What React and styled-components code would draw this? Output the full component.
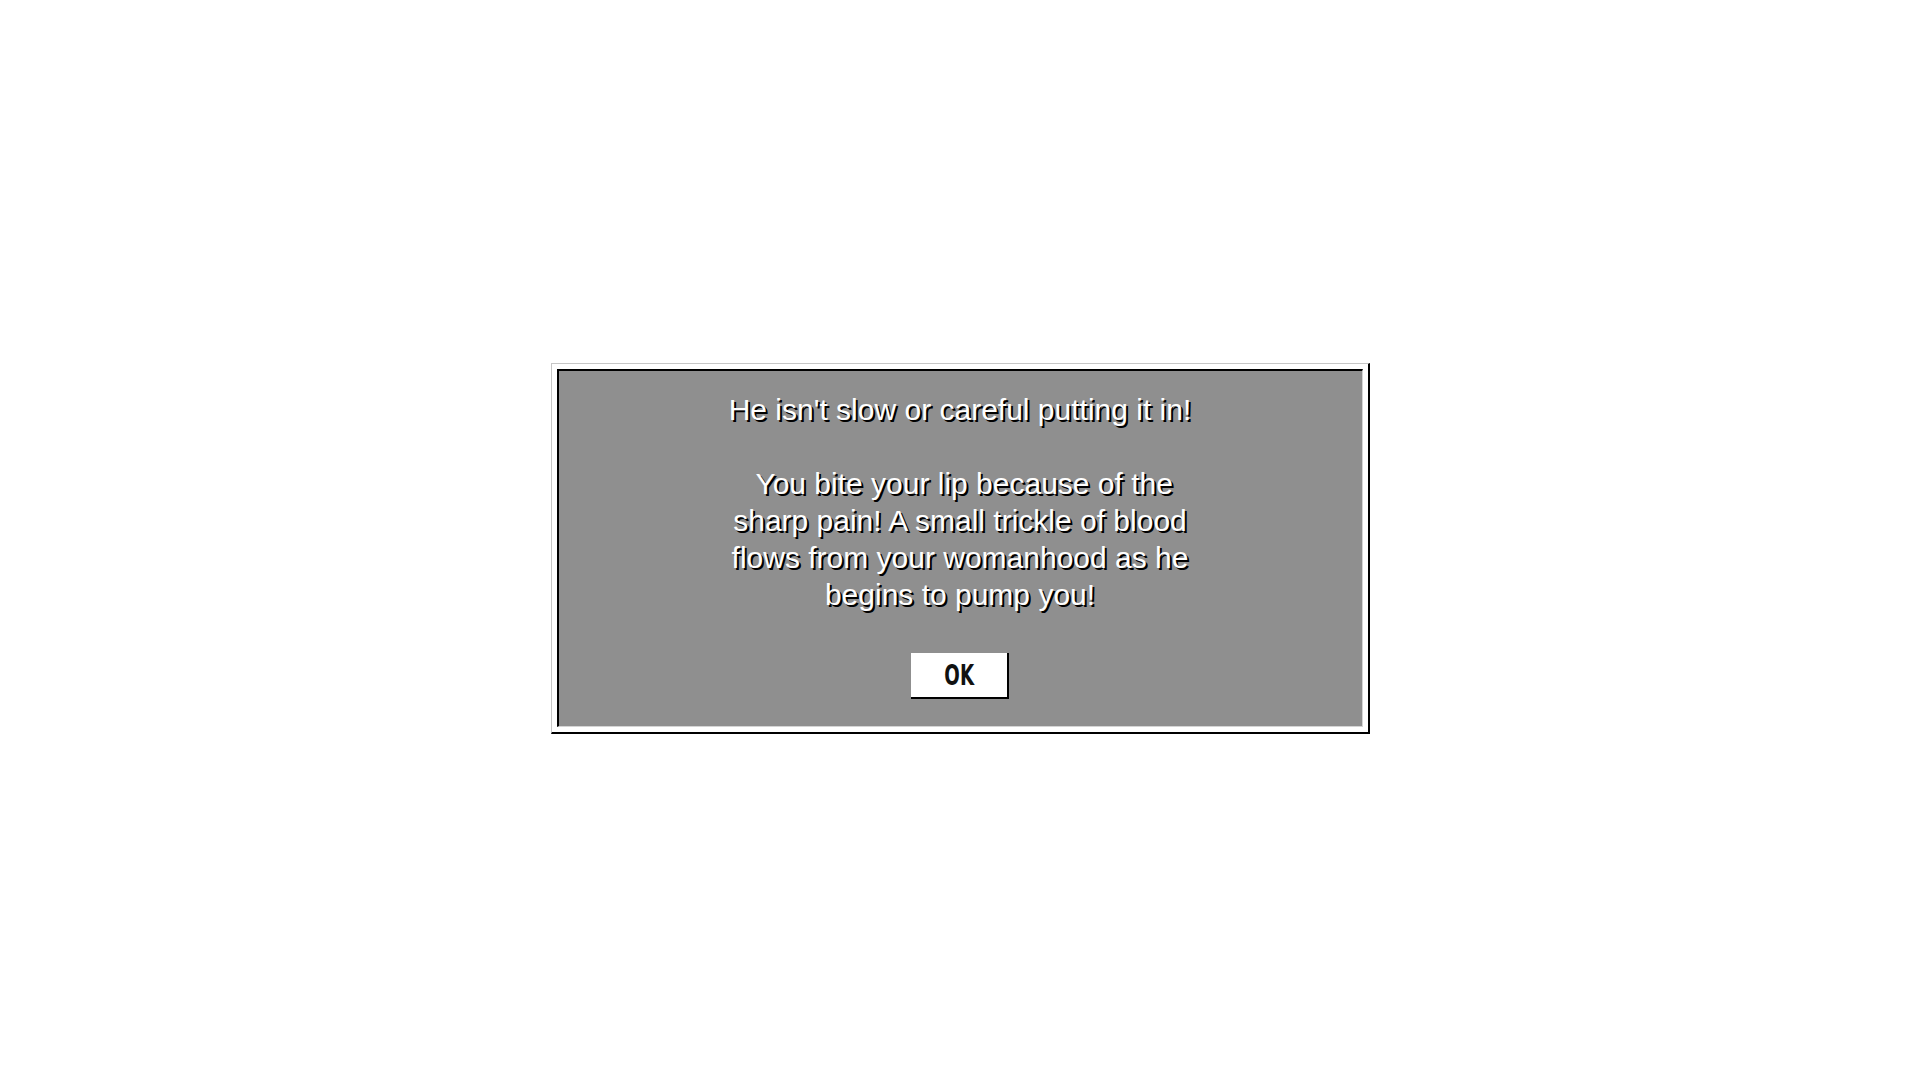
import React from "react";
import styled, { createGlobalStyle } from "styled-components";

const Global = createGlobalStyle`
  html, body { margin: 0; padding: 0; background: #ffffff; }
  * { box-sizing: border-box; }
`;

const Screen = styled.div`
  height: 1080px;
  padding-top: 16px;
  display: flex;
  align-items: center;
  justify-content: center;
`;

const Frame = styled.div`
  background: #ffffff;
  border-top: 1px solid #c6c6c6;
  border-left: 1px solid #c6c6c6;
  border-right: 2px solid #000000;
  border-bottom: 2px solid #000000;
  padding: 5px;
`;

const Panel = styled.div`
  width: 806px;
  background: #8f8f8f;
  border-top: 2px solid #000000;
  border-left: 2px solid #000000;
  border-right: 1px solid #d4d4d4;
  border-bottom: 1px solid #d4d4d4;
  padding: 20px 0 27px;
  display: flex;
  flex-direction: column;
  align-items: center;
`;

const Message = styled.div`
  width: 500px;
  text-align: center;
  font-family: "Liberation Sans", Arial, sans-serif;
  font-size: 30px;
  line-height: 37px;
  color: #ffffff;
  text-shadow: 2px 2px 0.5px #000000;
`;

const OkButton = styled.button`
  margin-top: 40px;
  width: 98px;
  height: 46px;
  background: #ffffff;
  border: none;
  border-right: 2px solid #000000;
  border-bottom: 2px solid #000000;
  padding: 0;
  font-family: "Liberation Sans Narrow", "DejaVu Sans Condensed", "Liberation Sans", sans-serif;
  font-stretch: condensed;
  font-weight: 700;
  font-size: 29px;
  color: #111111;
  cursor: pointer;
`;

const OkLabel = styled.span`
  display: inline-block;
  transform: scaleX(0.7);
`;

export default function App() {
  return (
    <>
      <Global />
      <Screen>
        <Frame>
          <Panel>
            <Message>
              He isn't slow or careful putting it in!
              <br />
              <br />
              {"\u00a0"}You bite your lip because of the sharp pain! A small trickle of blood flows from your womanhood as he begins to pump you!
            </Message>
            <OkButton>
              <OkLabel>OK</OkLabel>
            </OkButton>
          </Panel>
        </Frame>
      </Screen>
    </>
  );
}
